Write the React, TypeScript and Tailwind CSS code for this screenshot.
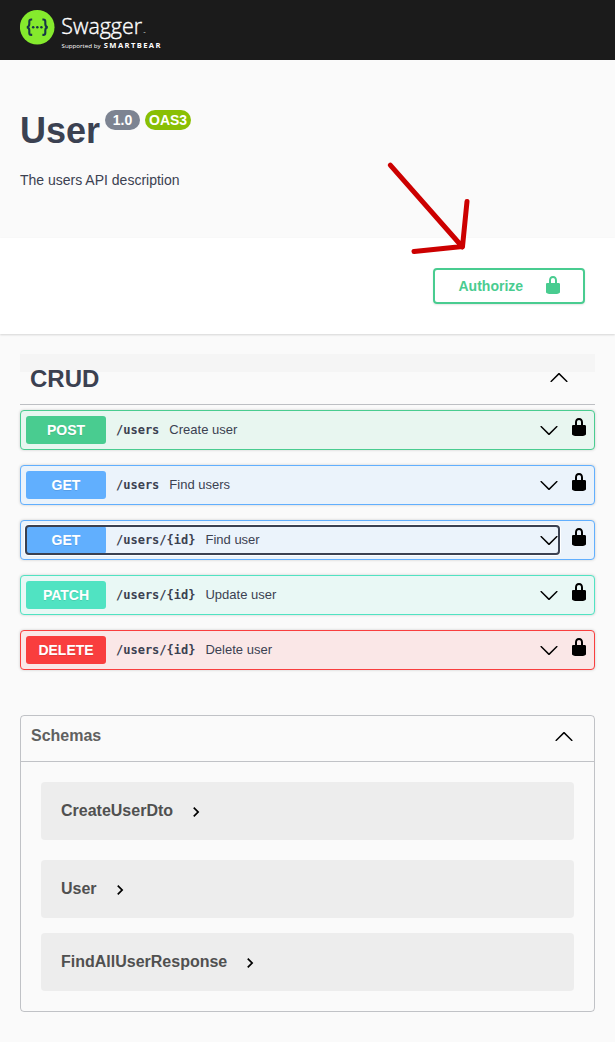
const UP =
  "M 17.418 14.908 C 17.69 15.176 18.127 15.176 18.397 14.908 C 18.667 14.64 18.668 14.207 18.397 13.939 L 10.489 6.109 C 10.219 5.841 9.782 5.841 9.51 6.109 L 1.602 13.939 C 1.332 14.207 1.332 14.64 1.602 14.908 C 1.873 15.176 2.311 15.176 2.581 14.908 L 10 7.767 L 17.418 14.908 Z";
const DOWN =
  "M17.418 6.109c.272-.268.709-.268.979 0s.271.701 0 .969l-7.908 7.83c-.27.268-.707.268-.979 0l-7.908-7.83c-.27-.268-.27-.701 0-.969.271-.268.709-.268.979 0L10 13.25l7.418-7.141z";
const LOCK =
  "M15.8 8H14V5.6C14 2.703 12.665 1 10 1 7.334 1 6 2.703 6 5.6V8H4c-.553 0-1 .646-1 1.199V17c0 .549.428 1.139.951 1.307l1.197.387C5.672 18.861 6.55 19 7.1 19h5.8c.549 0 1.428-.139 1.951-.307l1.196-.387c.524-.167.953-.757.953-1.306V9.199C17 8.646 16.352 8 15.8 8zM12 8H8V5.199C8 3.754 8.797 3 10 3c1.203 0 2 .754 2 2.199V8z";

function Icon({ d, className = "" }: { d: string; className?: string }) {
  return (
    <svg viewBox="0 0 20 20" className={`size-5 shrink-0 fill-current ${className}`} aria-hidden="true">
      <path d={d} />
    </svg>
  );
}

function Logo() {
  return (
    <svg width="150" height="50" viewBox="0 0 150 50" role="img" aria-label="Swagger">
      <circle cx="17.2" cy="22.2" r="17.3" fill="#85ea2d" />
      <g fill="none" stroke="#173647" strokeWidth="2.1">
        <path d="M12.2 14.5h-.9q-2 0-2 2v2.6q0 2.7-2.4 3.1 2.4.4 2.4 3.1v2.6q0 2 2 2h.9" />
        <path d="M22.4 14.5h.9q2 0 2 2v2.6q0 2.7 2.4 3.1-2.4.4-2.4 3.1v2.6q0 2-2 2h-.9" />
      </g>
      <g fill="#173647">
        <circle cx="13.2" cy="22.2" r="1.25" />
        <circle cx="17.3" cy="22.2" r="1.25" />
        <circle cx="21.4" cy="22.2" r="1.25" />
      </g>
      <g fill="#fff" fontFamily="'Open Sans', sans-serif">
        <text x="41.3" y="29.3" fontSize="22.5" fontWeight="300" stroke="#fff" strokeWidth="0.4" textLength="80.7" lengthAdjust="spacingAndGlyphs">Swagger</text>
        <text x="123.3" y="29.2" fontSize="3">™</text>
        <text x="41.6" y="43.4" fontSize="6" textLength="39" lengthAdjust="spacingAndGlyphs">Supported by</text>
        <text x="83.8" y="43.4" fontSize="7.6" fontWeight="700" textLength="56.6" lengthAdjust="spacing">SMARTBEAR</text>
      </g>
    </svg>
  );
}

const operations = [
  { method: "POST", path: "/users", text: "Create user", box: "border-[#49cc90] bg-[#e8f6f0]", tag: "bg-[#49cc90]" },
  { method: "GET", path: "/users", text: "Find users", box: "border-[#61affe] bg-[#ebf3fb]", tag: "bg-[#61affe]" },
  { method: "GET", path: "/users/{id}", text: "Find user", box: "border-[#61affe] bg-[#ebf3fb]", tag: "bg-[#61affe]", focused: true },
  { method: "PATCH", path: "/users/{id}", text: "Update user", box: "border-[#50e3c2] bg-[#e9f8f5]", tag: "bg-[#50e3c2]" },
  { method: "DELETE", path: "/users/{id}", text: "Delete user", box: "border-[#f93e3e] bg-[#fae7e7]", tag: "bg-[#f93e3e]" },
];

const schemas = [
  { name: "CreateUserDto", gap: "mb-5" },
  { name: "User", gap: "mb-[15px]" },
  { name: "FindAllUserResponse", gap: "" },
];

function Operation({ op }: { op: (typeof operations)[number] }) {
  return (
    <div className={`flex h-10 rounded border p-[5px] shadow-[0_0_3px_rgba(0,0,0,0.19)] ${op.box}`}>
      <button
        className={`flex h-7 w-[533px] items-center rounded-[3px] text-left ${
          op.focused ? "outline-2 -outline-offset-1 outline-[#3b4151] shadow-[0_0_0_2px_#ffffff]" : ""
        }`}
      >
        <span
          className={`flex h-7 w-20 items-center justify-center rounded-[3px] text-sm font-bold text-white [text-shadow:0_1px_0_rgba(0,0,0,0.1)] ${op.tag}`}
        >
          {op.method}
        </span>
        <span className="ml-2.5 font-['DejaVu_Sans_Mono',monospace] text-[12px] font-bold">{op.path}</span>
        <span className="ml-2.5 text-[13px]">{op.text}</span>
        <Icon d={DOWN} className="ml-auto text-black" />
      </button>
      <Icon d={LOCK} className="ml-2.5 mt-px text-black" />
    </div>
  );
}

export default function App() {
  return (
    <div className="min-h-[1042px] w-[615px] overflow-hidden bg-[#fafafa] font-['Liberation_Sans',sans-serif] text-[#3b4151]">
      <header className="flex h-[60px] bg-[#1b1b1b] pl-5 pt-[5px]">
        <Logo />
      </header>

      <section className="relative h-[178px] px-5 pt-[50px]">
        <div className="flex items-start">
          <h1 className="text-[36px] leading-[41px] font-bold">User</h1>
          <span className="ml-[5px] flex h-5 w-[35px] items-center justify-center rounded-full bg-[#7d8492] text-sm font-bold text-white">1.0</span>
          <span className="ml-[5px] flex h-5 w-[46px] items-center justify-center rounded-full bg-[#89bf04] text-sm font-bold text-white">OAS3</span>
        </div>
        <p className="mt-[21px] text-sm leading-4">The users API description</p>
        <svg className="absolute left-[380px] top-[95px] z-10" width="100" height="105" viewBox="380 155 100 105" fill="none" stroke="#cc0000" strokeWidth="5" strokeLinecap="round" strokeLinejoin="round">
          <path d="M390.3 165.2 462.5 247M467 201.5 462.5 246.5 414 251.5" />
        </svg>
      </section>

      <section className="flex h-24 justify-end bg-white pr-[30px] pt-[30px] shadow-[0_1px_2px_rgba(0,0,0,0.15)]">
        <button className="flex h-9 w-[152px] items-center rounded border-2 border-[#49cc90] pl-[23.5px] text-sm font-bold text-[#49cc90] shadow-[0_1px_2px_rgba(0,0,0,0.1)]">
          Authorize
          <Icon d={LOCK} className="ml-5 -mt-0.5" />
        </button>
      </section>

      <main className="px-5 pt-5">
        <div className="h-[51px] border-b border-[#3b4151]/30 bg-linear-to-b from-black/[0.02] from-[18px] to-transparent to-[18px]">
          <div className="flex items-center justify-between pl-2.5 pr-[26px] pt-[11px]">
            <h2 className="text-2xl leading-7 font-bold">CRUD</h2>
            <Icon d={UP} className="mb-1 text-black" />
          </div>
        </div>

        <div className="mt-[5px] flex flex-col gap-[15px]">
          {operations.map((op) => (
            <Operation key={op.method + op.path} op={op} />
          ))}
        </div>

        <section className="mt-[45px] h-[297px] rounded border border-[#3b4151]/30">
          <div className="flex h-[46px] items-center justify-between border-b border-[#3b4151]/30 pb-[5px] pl-2.5 pr-5">
            <h3 className="text-base font-bold text-[#606060]">Schemas</h3>
            <Icon d={UP} className="text-black" />
          </div>
          <div className="px-5 pt-5">
            {schemas.map((s) => (
              <div key={s.name} className={`flex h-[58px] items-center rounded bg-[#ededed] pl-5 ${s.gap}`}>
                <span className="text-base font-bold text-[#505050]">{s.name}</span>
                <svg viewBox="0 0 24 24" className="ml-[13px] mt-px size-5 fill-black" aria-hidden="true">
                  <path d="M10 6L8.59 7.41 13.17 12l-4.58 4.59L10 18l6-6z" />
                </svg>
              </div>
            ))}
          </div>
        </section>
      </main>
    </div>
  );
}
